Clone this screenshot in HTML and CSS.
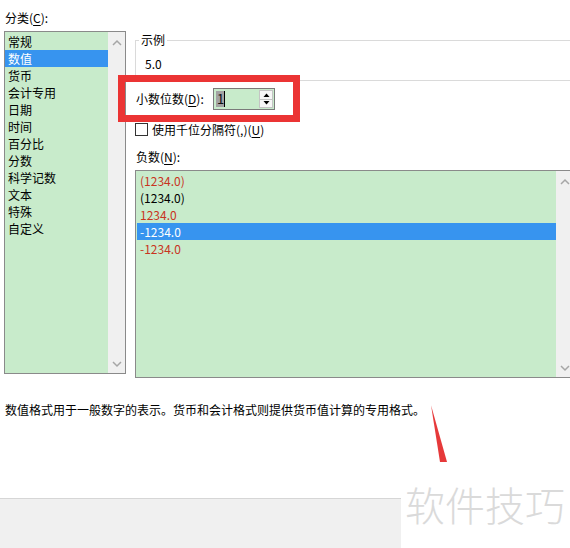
FILE: index.html
```html
<!DOCTYPE html>
<html lang="zh-CN">
<head>
<meta charset="utf-8">
<title>设置单元格格式</title>
<link rel="stylesheet" href="styles.css">
</head>
<body>
<div class="main">
  <div class="left-col">
    <div class="label cat-label">分类(<u>C</u>):</div>
    <div class="listbox cat-list">
      <ul class="items">
        <li>常规</li>
        <li class="sel">数值</li>
        <li>货币</li>
        <li>会计专用</li>
        <li>日期</li>
        <li>时间</li>
        <li>百分比</li>
        <li>分数</li>
        <li>科学记数</li>
        <li>文本</li>
        <li>特殊</li>
        <li>自定义</li>
      </ul>
      <div class="vscroll">
        <div class="sb-btn"><svg width="10" height="7" viewBox="0 0 10 7"><polyline points="1,6 5,2 9,6" fill="none" stroke="#a6a6a6" stroke-width="1.5"/></svg></div>
        <div class="sb-btn"><svg width="10" height="7" viewBox="0 0 10 7"><polyline points="1,1 5,5 9,1" fill="none" stroke="#a6a6a6" stroke-width="1.5"/></svg></div>
      </div>
    </div>
  </div>
  <div class="right-col">
    <fieldset class="sample">
      <legend>示例</legend>
      <div class="sample-val">5.0</div>
    </fieldset>
    <div class="dec-row">
      <span class="dec-label">小数位数(<u>D</u>):</span>
      <div class="spinner">
        <div class="spin-text"><span class="sel-text">1</span><span class="caret"></span></div>
        <div class="spin-btns">
          <div class="spin-btn"><svg width="7" height="4" viewBox="0 0 7 4"><polygon points="0.5,4 3.5,0.5 6.5,4" fill="#000"/></svg></div>
          <div class="spin-btn"><svg width="7" height="4" viewBox="0 0 7 4"><polygon points="0.5,0 3.5,3.5 6.5,0" fill="#000"/></svg></div>
        </div>
      </div>
    </div>
    <div class="check-row">
      <span class="checkbox"></span>
      <span>使用千位分隔符(,)(<u>U</u>)</span>
    </div>
    <div class="label neg-label">负数(<u>N</u>):</div>
    <div class="listbox neg-list">
      <ul class="items">
        <li class="red">(1234.0)</li>
        <li>(1234.0)</li>
        <li class="red">1234.0</li>
        <li class="sel">-1234.0</li>
        <li class="red">-1234.0</li>
      </ul>
      <div class="vscroll">
        <div class="sb-btn"><svg width="10" height="7" viewBox="0 0 10 7"><polyline points="1,6 5,2 9,6" fill="none" stroke="#a6a6a6" stroke-width="1.5"/></svg></div>
        <div class="sb-btn"><svg width="10" height="7" viewBox="0 0 10 7"><polyline points="1,1 5,5 9,1" fill="none" stroke="#a6a6a6" stroke-width="1.5"/></svg></div>
      </div>
    </div>
  </div>
</div>
<p class="desc">数值格式用于一般数字的表示。货币和会计格式则提供货币值计算的专用格式。</p>
<div class="footer">
  <div class="statusbar"></div>
  <div class="watermark">软件技巧</div>
</div>
<div class="highlight-box"></div>
<svg class="arrow" width="570" height="548" viewBox="0 0 570 548"><polygon points="431,405 440,462 447,462" fill="#e6393a"/></svg>
</body>
</html>
```
FILE: styles.css
```css
* {
  box-sizing: border-box;
}

html,
body {
  margin: 0;
  padding: 0;
  background: #fff;
  overflow: hidden;
}

body {
  width: 570px;
  height: 548px;
  position: relative;
  font-family: "Noto Sans CJK SC", "Microsoft YaHei", sans-serif;
  font-size: 12px;
  line-height: 16px;
  color: #000;
}

u {
  text-decoration: underline;
  text-underline-offset: 2px;
}

.main {
  display: flex;
  gap: 9px;
  padding: 10px 0 0 4px;
}

.left-col {
  flex: none;
  width: 122px;
  display: flex;
  flex-direction: column;
  gap: 5px;
}

.label {
  height: 16px;
  white-space: nowrap;
}

.cat-label {
  padding-left: 1px;
}

.listbox {
  display: flex;
  border: 1px solid #8a8a8a;
  background: #c8ebcb;
}

.cat-list {
  height: 343px;
}

.items {
  flex: 1;
  list-style: none;
  margin: 0;
  padding: 1px 0 0 0;
  min-width: 0;
}

.items li {
  height: 17px;
  line-height: 17px;
  white-space: nowrap;
}

.cat-list .items li {
  padding-left: 3px;
}

.items li.sel {
  background: #3794ef;
  color: #fff;
}

.items li.red {
  color: #c8341f;
}

.vscroll {
  flex: none;
  width: 17px;
  background: #f0f0f0;
  display: flex;
  flex-direction: column;
  justify-content: space-between;
}

.sb-btn {
  height: 17px;
  display: flex;
  align-items: center;
  justify-content: center;
}

.sb-btn:first-child {
  padding-top: 3px;
}

.right-col {
  flex: none;
  width: 439px;
  display: flex;
  flex-direction: column;
}

.sample {
  margin: 22px 0 0 0;
  padding: 0 0 8px 3px;
  border: 1px solid #dadada;
  min-width: 0;
}

.sample legend {
  padding: 0 2px;
  height: 16px;
  line-height: 16px;
}

.sample-val {
  margin: 8px 0 0 6px;
  height: 16px;
}

.dec-row {
  margin-top: 7px;
  height: 22px;
  display: flex;
  align-items: center;
}

.dec-label {
  width: 78px;
  padding-left: 1px;
  white-space: nowrap;
}

.spinner {
  width: 62px;
  height: 22px;
  border: 1px solid #7a7a7a;
  background: #c8ebcb;
  display: flex;
}

.spin-text {
  flex: 1;
  display: flex;
  align-items: flex-start;
  padding: 2px 0 0 2px;
}

.sel-text {
  background: #a3a3a3;
  height: 16px;
  line-height: 16px;
  padding: 0 0 0 1px;
  font-size: 13px;
  color: #111;
}

.caret {
  width: 1px;
  height: 16px;
  background: #000;
}

.spin-btns {
  flex: none;
  width: 14px;
  margin: 1px 1px 1px 0;
  display: flex;
  flex-direction: column;
}

.spin-btn {
  flex: 1;
  display: flex;
  align-items: center;
  justify-content: center;
  background: #f7f7f7;
  border: 1px solid #c4c4c4;
}

.spin-btn + .spin-btn {
  border-top: none;
}

.check-row {
  margin-top: 13px;
  height: 13px;
  display: flex;
  align-items: center;
  gap: 4px;
  white-space: nowrap;
}

.checkbox {
  flex: none;
  width: 13px;
  height: 13px;
  border: 1px solid #333;
  background: #fff;
}

.neg-label {
  margin-top: 13px;
  padding-left: 1px;
}

.neg-list {
  margin-top: 5px;
  height: 208px;
}

.neg-list .items {
  padding-left: 1px;
}

.neg-list .items li {
  padding-left: 3px;
}

.desc {
  margin: 24px 0 0 5px;
  height: 16px;
  white-space: nowrap;
}

.footer {
  margin-top: 65px;
  height: 65px;
  display: flex;
  align-items: flex-end;
}

.statusbar {
  flex: none;
  width: 401px;
  height: 50px;
  background: #f0f0f0;
  border-top: 1px solid #d6d6d6;
}

.watermark {
  flex: 1;
  align-self: flex-start;
  padding-left: 4px;
  font-size: 40px;
  font-weight: 300;
  line-height: 42px;
  color: #dadada;
  white-space: nowrap;
}

.highlight-box {
  position: absolute;
  left: 118px;
  top: 75px;
  width: 182px;
  height: 47px;
  border: 7px solid #eb3434;
}

.arrow {
  position: absolute;
  left: 0;
  top: 0;
  pointer-events: none;
}
```
